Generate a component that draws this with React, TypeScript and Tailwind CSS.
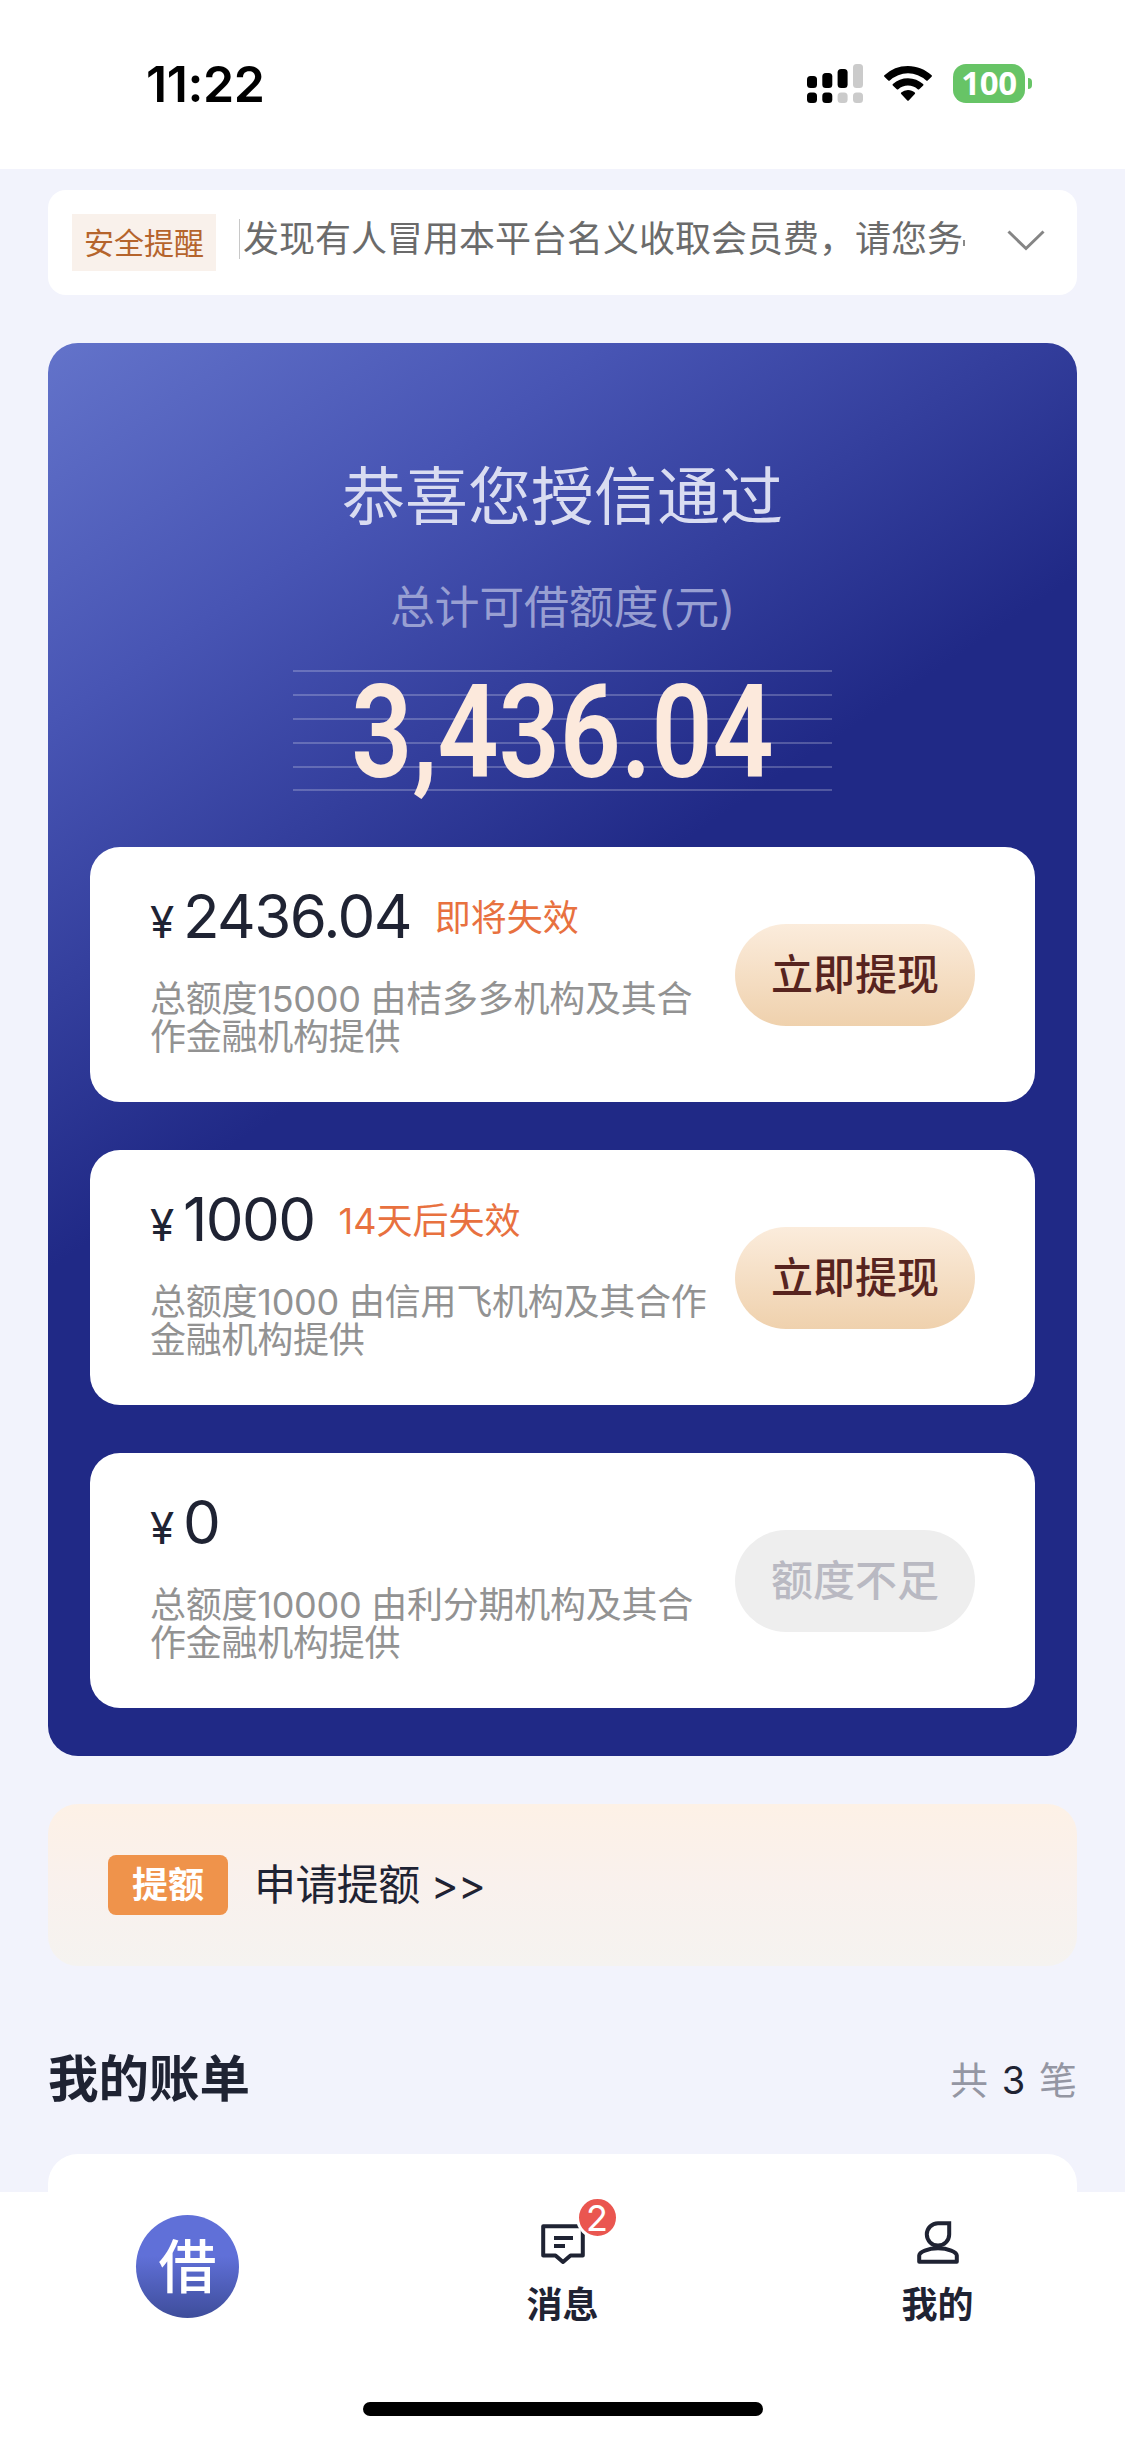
import { clsx } from 'clsx'

const lenders = [
  {
    amount: '2436.04',
    expire: '即将失效',
    desc: '总额度15000 由桔多多机构及其合作金融机构提供',
    available: true,
  },
  {
    amount: '1000',
    expire: '14天后失效',
    desc: '总额度1000 由信用飞机构及其合作金融机构提供',
    available: true,
  },
  {
    amount: '0',
    expire: '',
    desc: '总额度10000 由利分期机构及其合作金融机构提供',
    available: false,
  },
]

const StatusBar = () => (
  <header className="flex h-[169px] items-start justify-between bg-white pl-[146px] pr-[93px] pt-[60px] text-black">
    <p className="text-[50px] font-semibold leading-[48px] tracking-[-0.400px]">11:22</p>
    <div className="flex items-start pt-1">
      <svg className="h-10 w-[57px]" viewBox="0 0 57 40">
        <rect x="0" y="12" width="10" height="12" rx="3.5" />
        <rect x="15.3" y="9" width="10" height="15" rx="3.5" />
        <rect x="30.6" y="5" width="10" height="19" rx="3.5" />
        <rect x="46" y="0" width="10" height="24" rx="3.5" fill="#cbcbcb" />
        <rect x="0" y="28.5" width="10" height="10.5" rx="3.5" />
        <rect x="15.3" y="28.5" width="10" height="10.5" rx="3.5" />
        <rect x="30.6" y="28.5" width="10" height="10.5" rx="3.5" fill="#cbcbcb" />
        <rect x="46" y="28.5" width="10" height="10.5" rx="3.5" fill="#cbcbcb" />
      </svg>
      <svg className="ml-5 mt-0.5 h-[35px] w-12" viewBox="0 0 48 35">
        <path d="M24 0C33 0 41.400 3.500 47.600 9.300Q48.300 10 47.600 10.700L43.700 14.500Q43 15.200 42.200 14.500A26.500 26.500 0 0 0 5.800 14.500Q5 15.200 4.300 14.500L.4 10.700Q-.3 10 .4 9.300A34.500 34.500 0 0 1 24 0Z" />
        <path d="M24 12.200C29.800 12.200 35.100 14.400 39.100 18Q39.900 18.700 39.200 19.400L35.200 23.200Q34.500 23.900 33.700 23.200A14.800 14.800 0 0 0 14.300 23.200Q13.500 23.900 12.800 23.200L8.800 19.400Q8.100 18.700 8.900 18A22.500 22.500 0 0 1 24 12.200Z" />
        <path d="M24 24C26.600 24 29 25 30.800 26.600Q31.500 27.300 30.800 28L24.700 34.400Q24 35 23.300 34.400L17.200 28Q16.500 27.300 17.200 26.600A10.200 10.200 0 0 1 24 24Z" />
      </svg>
      <div className="ml-[21px] flex h-[39px] w-[72px] items-center justify-center rounded-[13px] bg-[#67c466] pb-0.5 font-['Noto_Sans',sans-serif] text-[33px] font-bold leading-none tracking-[-0.300px] text-white">
        100
      </div>
      <div className="ml-[3px] mt-[14px] h-[11px] w-1 rounded-r-full bg-[#67c466]" />
    </div>
  </header>
)

const SafetyNotice = () => (
  <section className="flex h-[105px] items-center rounded-[18px] bg-white pl-6">
    <div className="flex h-[57px] w-[144px] items-center justify-center bg-[#f9f1eb] text-[30px] leading-none text-[#b5642c]">
      安全提醒
    </div>
    <div className="mb-[7px] ml-[23px] flex w-[727px] items-center border-l border-[#c8c8c8] pl-[3px]">
      <p className="whitespace-nowrap text-[36px] leading-10 text-[#6b6b6b]">
        发现有人冒用本平台名义收取会员费，请您务
      </p>
      <span className="mt-2 h-1.5 w-0.5 bg-[#8a8a8a]" />
    </div>
    <svg className="mb-1.5 ml-10 h-6 w-10" viewBox="0 0 40 24" fill="none" stroke="#858585" strokeWidth="3">
      <path d="M2.500 3.500L20 20.500L37.500 3.500" />
    </svg>
  </section>
)

const LenderCard = ({ amount, expire, desc, available }: (typeof lenders)[number]) => (
  <li className="flex h-[255px] items-center justify-between rounded-[30px] bg-white pl-[60px] pr-[60px]">
    <div className="h-full w-[562px] pt-[39px]">
      <div className="flex h-[66px] items-center">
        <p className="flex items-baseline leading-[66px] text-[#1f2333]">
          <span className="w-[33px] text-[44px]">¥</span>
          <span className="text-[60px] tracking-[-1.600px]">{amount}</span>
        </p>
        {expire && (
          <span className="mb-0.5 ml-6 text-[36px] leading-[66px] text-[#e8713f]">{expire}</span>
        )}
      </div>
      <p className="mt-[29px] text-[36px] leading-[37.500px] tracking-[-0.250px] text-[#929292]">{desc}</p>
    </div>
    <button
      className={clsx(
        'h-[102px] w-[240px] rounded-full text-[42px] font-medium leading-none',
        available
          ? 'bg-linear-to-b from-[#fbecdc] to-[#efd1ad] text-[#57241f]'
          : 'bg-[#eeeeee] text-[#b9b9c2]'
      )}
    >
      {available ? '立即提现' : '额度不足'}
    </button>
  </li>
)

const CreditPanel = () => (
  <section className="mt-12 h-[1413px] rounded-[30px] bg-[linear-gradient(146deg,#6373ca_0%,#4855b4_18%,#202986_44%)] px-[42px] pt-[118px] text-center">
    <h1 className="text-[63px] leading-[70px] text-[#d9dcf1]">恭喜您授信通过</h1>
    <p className="mt-[52px] text-[45px] leading-[50px] tracking-[-0.300px] text-[#989fd2]">总计可借额度(元)</p>
    <div className="mx-auto mt-[37px] h-[122px] w-[539px] bg-[repeating-linear-gradient(to_bottom,rgba(255,255,255,0.22)_0,rgba(255,255,255,0.22)_2px,transparent_2px,transparent_23.900px)]">
      <p className="origin-center scale-x-[0.83] pt-0.5 font-[Roboto] text-[129px] font-semibold leading-[122px] text-[#fce9dc]">
        3,436.04
      </p>
    </div>
    <ul className="mt-[55px] flex flex-col gap-12 text-left">
      {lenders.map((row) => (
        <LenderCard key={row.desc} {...row} />
      ))}
    </ul>
  </section>
)

const RaiseLimit = () => (
  <section className="mt-12 flex h-[162px] items-center rounded-[30px] bg-linear-to-b from-[#fdf1e6] via-[#f9f1ed] to-[#f5f3f0] px-[60px]">
    <span className="flex h-[60px] w-[120px] items-center justify-center rounded-lg bg-[#ef934b] text-[36px] font-bold leading-none text-white">
      提额
    </span>
    <span className="ml-[26px] text-[42px] leading-none tracking-[-0.600px] text-[#1f2333]">申请提额 &gt;&gt;</span>
  </section>
)

const TabBar = () => (
  <nav className="flex h-[247px] flex-col items-center justify-between bg-white pb-[23px] pt-[23px]">
    <div className="grid w-full grid-cols-3 text-[36px] font-bold leading-9 text-[#1f2333]">
      <div className="flex justify-center">
        <span className="flex size-[103px] items-center justify-center rounded-full bg-linear-to-b from-[#6070d8] from-40% to-[#3e4d9b] text-[58px] font-medium leading-none text-white">
          借
        </span>
      </div>
      <div className="flex flex-col items-center">
        <div className="relative mt-[9px] h-10 w-[44px]">
          <svg className="h-10 w-[44px]" viewBox="0 0 44 40" fill="none" stroke="#1f2333" strokeWidth="4">
            <path d="M2.200 2.200H41.800V31.500H29.500L22 38L14.500 31.500H2.200Z" strokeLinejoin="round" />
            <path d="M13 14H32M13 22H24" />
          </svg>
          <span className="absolute -top-[28px] left-[35px] flex size-[43px] items-center justify-center rounded-full border-[3px] border-white bg-[#ea5650] text-[36px] font-normal leading-none text-white">
            2
          </span>
        </div>
        <span className="mt-[23px]">消息</span>
      </div>
      <div className="flex flex-col items-center">
        <svg className="mt-[6px] h-[43px] w-[42px]" viewBox="0 0 42 43" fill="none" stroke="#1f2333" strokeWidth="4">
          <path d="M21 2.200H32.200V13.500A11.200 11.200 0 1 1 21 2.200Z" />
          <path d="M2.200 40.800V34.500C2.200 31 11 27.200 21 27.200S39.800 31 39.800 34.500V40.800Z" strokeLinejoin="round" />
        </svg>
        <span className="mt-[23px]">我的</span>
      </div>
    </div>
    <div className="h-[14px] w-[400px] rounded-full bg-black" />
  </nav>
)

export default function App() {
  return (
    <div className="flex h-[2439px] w-[1125px] flex-col overflow-hidden bg-[#f2f3fc] font-[Inter,'Noto_Sans_CJK_SC',sans-serif]">
      <StatusBar />
      <main className="h-[2023px] overflow-hidden px-12 pt-[21px]">
        <SafetyNotice />
        <CreditPanel />
        <RaiseLimit />
        <div className="mt-[81px] flex h-16 items-center justify-between">
          <h2 className="text-[50.500px] font-bold leading-none text-[#1f2333]">我的账单</h2>
          <p className="pt-0.5 text-[38px] leading-none text-[#9496a3] [word-spacing:3px]">
            共 <span className="text-[#1f2333]">3</span> 笔
          </p>
        </div>
        <div className="mt-[43px] h-20 rounded-t-[30px] bg-white" />
      </main>
      <TabBar />
    </div>
  )
}
